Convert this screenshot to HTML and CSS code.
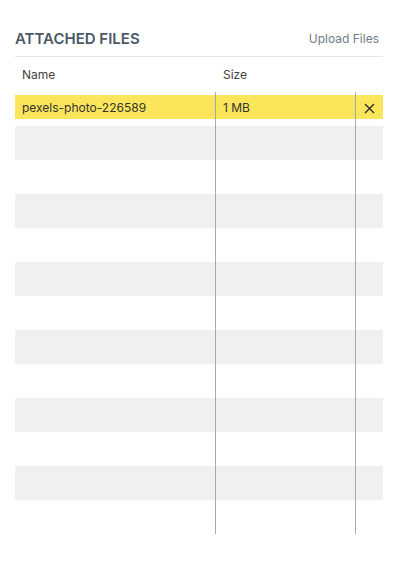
FILE: index.html
```html
<!DOCTYPE html>
<html>
<head>
<meta charset="utf-8">
<link rel="stylesheet" href="styles.css">
</head>
<body>
<div class="panel">
  <div class="head">
    <h2 class="title">ATTACHED FILES</h2>
    <a class="upload">Upload Files</a>
  </div>
  <div class="cols">
    <div class="col-name">Name</div>
    <div class="col-size">Size</div>
    <div class="col-act"></div>
  </div>
  <div class="body">
    <div class="row first">
      <div class="cell c1"><div class="fill">pexels-photo-226589</div></div>
      <div class="cell c2"><div class="fill">1 MB</div></div>
      <div class="cell c3"><div class="fill x"><svg width="11" height="11" viewBox="0 0 11 11"><path d="M1 1L10 10M10 1L1 10" stroke="#2b2b2b" stroke-width="1.4" fill="none"/></svg></div></div>
    </div>
    <div class="row"><div class="cell c1"></div><div class="cell c2"></div><div class="cell c3"></div></div>
    <div class="row"><div class="cell c1"></div><div class="cell c2"></div><div class="cell c3"></div></div>
    <div class="row"><div class="cell c1"></div><div class="cell c2"></div><div class="cell c3"></div></div>
    <div class="row"><div class="cell c1"></div><div class="cell c2"></div><div class="cell c3"></div></div>
    <div class="row"><div class="cell c1"></div><div class="cell c2"></div><div class="cell c3"></div></div>
    <div class="row"><div class="cell c1"></div><div class="cell c2"></div><div class="cell c3"></div></div>
    <div class="row"><div class="cell c1"></div><div class="cell c2"></div><div class="cell c3"></div></div>
    <div class="row"><div class="cell c1"></div><div class="cell c2"></div><div class="cell c3"></div></div>
    <div class="row"><div class="cell c1"></div><div class="cell c2"></div><div class="cell c3"></div></div>
    <div class="row"><div class="cell c1"></div><div class="cell c2"></div><div class="cell c3"></div></div>
    <div class="row"><div class="cell c1"></div><div class="cell c2"></div><div class="cell c3"></div></div>
    <div class="row"><div class="cell c1"></div><div class="cell c2"></div><div class="cell c3"></div></div>
  </div>
</div>
</body>
</html>
```

FILE: styles.css
```css
html, body {
  margin: 0;
  padding: 0;
  background: #ffffff;
}
body {
  font-family: Inter, "Noto Sans", sans-serif;
}
.panel {
  width: 368px;
  padding: 27px 0 0 15px;
}
.head {
  display: flex;
  justify-content: space-between;
  align-items: center;
  height: 22px;
  padding-bottom: 7px;
  border-bottom: 1px solid #e4e7ea;
}
.title {
  margin: 0;
  font-size: 15px;
  font-weight: 600;
  color: #4b5865;
}
.upload {
  font-size: 12px;
  color: #6f7b86;
  margin-right: 4px;
}
.cols {
  display: grid;
  grid-template-columns: 201px 140px 27px;
  height: 35px;
  align-items: center;
  font-size: 12px;
  color: #444444;
}
.col-name { padding-left: 7px; }
.col-size { padding-left: 7px; }
.body {
  display: flex;
  flex-direction: column;
}
.row {
  display: grid;
  grid-template-columns: 201px 140px 27px;
  height: 34px;
}
.row:nth-child(even) {
  background: #f0f0f0;
}
.cell {
  box-sizing: border-box;
}
.c1, .c2 {
  border-right: 1px solid #9eacb4;
}
.first .cell {
  padding-top: 3px;
}
.fill {
  height: 24px;
  background: #fbe55a;
  display: flex;
  align-items: center;
  padding-left: 7px;
  font-size: 12px;
  color: #333333;
}
.c3 .fill {
  padding-left: 0;
  justify-content: center;
  padding-top: 2px;
  box-sizing: border-box;
}
```
